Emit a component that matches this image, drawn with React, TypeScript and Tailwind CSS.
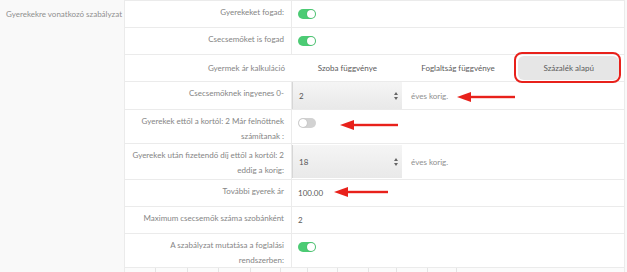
import React from 'react';

function Toggle({ on }: { on: boolean }) {
  return (
    <div
      className={`relative h-[10px] w-[18px] rounded-full ${on ? 'bg-[#4ccb74]' : 'bg-[#d2d2d2]'}`}
    >
      <div
        className={`absolute top-[1px] h-[8px] w-[8px] rounded-full bg-white shadow-[0_0_1px_rgba(0,0,0,0.3)] ${on ? 'right-[1px]' : 'left-[1px]'}`}
      />
    </div>
  );
}

function Arrow({ left, width, top }: { left: number; width: number; top: number }) {
  // red pointer drawn over the screenshot, tip on the left
  return (
    <svg
      className="absolute"
      style={{ left, top, width, height: 12 }}
      viewBox={`0 0 ${width} 12`}
    >
      <polygon points="0,6 14,1 14,11" fill="#e8211b" />
      <rect x="12" y="4.8" width={width - 12} height="2.4" fill="#e8211b" />
    </svg>
  );
}

function Select({ value }: { value: string }) {
  return (
    <div className="flex h-full w-[110px] items-center justify-between border-l border-[#d6d6d6] bg-gradient-to-b from-[#f5f5f5] to-[#e9e9e9] pl-[6px] pr-[4px] text-[#555]">
      <span>{value}</span>
      <svg width="4" height="8" viewBox="0 0 4 8">
        <polygon points="2,0 4,3 0,3" fill="#666" />
        <polygon points="0,5 4,5 2,8" fill="#666" />
      </svg>
    </div>
  );
}

function Row({
  label,
  h,
  children,
  valueClass = 'items-start px-[6px] pt-[8px]',
}: {
  label: React.ReactNode;
  h: string;
  children?: React.ReactNode;
  valueClass?: string;
}) {
  return (
    <div className={`flex ${h} shrink-0 border-b border-[#ebebeb] bg-white`}>
      <div className="w-[167px] shrink-0 border-r border-[#ebebeb] pr-[7px] pt-[4px] text-right leading-[15px] text-[#858585]">
        {label}
      </div>
      <div className={`relative flex flex-1 ${valueClass}`}>{children}</div>
    </div>
  );
}

export default function App() {
  const bottomCells = [31, 32, 31, 32, 30, 27, 30, 31, 28, 31, 29];
  return (
    <div
      className="flex h-[272px] w-[627px] overflow-hidden bg-[#f9f9f9] text-[8px]"
      style={{ fontFamily: 'Lato, "Open Sans", sans-serif' }}
    >
      <div className="w-[124px] shrink-0 pl-[6px] pt-[8px] text-[#8f8f8f]">
        Gyerekekre vonatkozó szabályzat
      </div>
      <div className="flex w-[501px] flex-col border-l border-r border-t border-[#ebebeb]">
        <Row label="Gyerekeket fogad:" h="h-[27px]">
          <Toggle on />
        </Row>
        <Row label="Csecsemőket is fogad" h="h-[27px]">
          <Toggle on />
        </Row>
        <div className="flex h-[27px] shrink-0 border-b border-[#ebebeb] bg-white">
          <div className="flex w-[167px] shrink-0 items-center justify-end pr-[7px] text-[#858585]">
            Gyermek ár kalkuláció
          </div>
          <div className="grid flex-1 grid-cols-3 text-[#5a5a5a]">
            <div className="flex items-center justify-center">Szoba függvénye</div>
            <div className="flex items-center justify-center">Foglaltság függvénye</div>
            <div className="relative flex items-center justify-center">
              <div className="absolute -top-[3px] left-[1px] right-[3px] -bottom-[2px] rounded-[8px] border-2 border-[#e8211b]" />
              <div className="flex h-[24px] w-[101px] items-center justify-center rounded-[6px] bg-[#e6e6e6]">
                Százalék alapú
              </div>
            </div>
          </div>
        </div>
        <Row label="Csecsemőknek ingyenes 0-" h="h-[28px]" valueClass="items-center">
          <Select value="2" />
          <span className="ml-[9px] text-[#8f8f8f]">éves korig.</span>
          <Arrow left={165} width={58} top={9} />
        </Row>
        <Row
          label={
            <>
              Gyerekek ettől a kortól: 2 Már felnőttnek
              <br />
              számítanak :
            </>
          }
          h="h-[34px]"
          valueClass="items-start px-[6px] pt-[8px]"
        >
          <Toggle on={false} />
          <Arrow left={48} width={58} top={9} />
        </Row>
        <Row
          label={
            <>
              Gyerekek után fizetendő díj ettől a kortól: 2
              <br />
              eddig a korig:
            </>
          }
          h="h-[36px]"
          valueClass="items-center"
        >
          <div className="h-full py-[1px]">
            <Select value="18" />
          </div>
          <span className="ml-[9px] text-[#8f8f8f]">éves korig.</span>
        </Row>
        <Row label="További gyerek ár" h="h-[27px]" valueClass="items-center px-[6px]">
          <span className="text-[#5a5a5a]">100.00</span>
          <Arrow left={42} width={54} top={6} />
        </Row>
        <Row label="Maximum csecsemők száma szobánként" h="h-[27px]" valueClass="items-center px-[6px]">
          <span className="text-[#5a5a5a]">2</span>
        </Row>
        <Row
          label={
            <>
              A szabályzat mutatása a foglalási
              <br />
              rendszerben:
            </>
          }
          h="h-[34px]"
        >
          <Toggle on />
        </Row>
        <div className="flex h-[10px] shrink-0 bg-[#fbfbfb]">
          {bottomCells.map((w, i) => (
            <div key={i} className="border-r border-[#e4e4e4]" style={{ width: w }} />
          ))}
        </div>
      </div>
    </div>
  );
}
